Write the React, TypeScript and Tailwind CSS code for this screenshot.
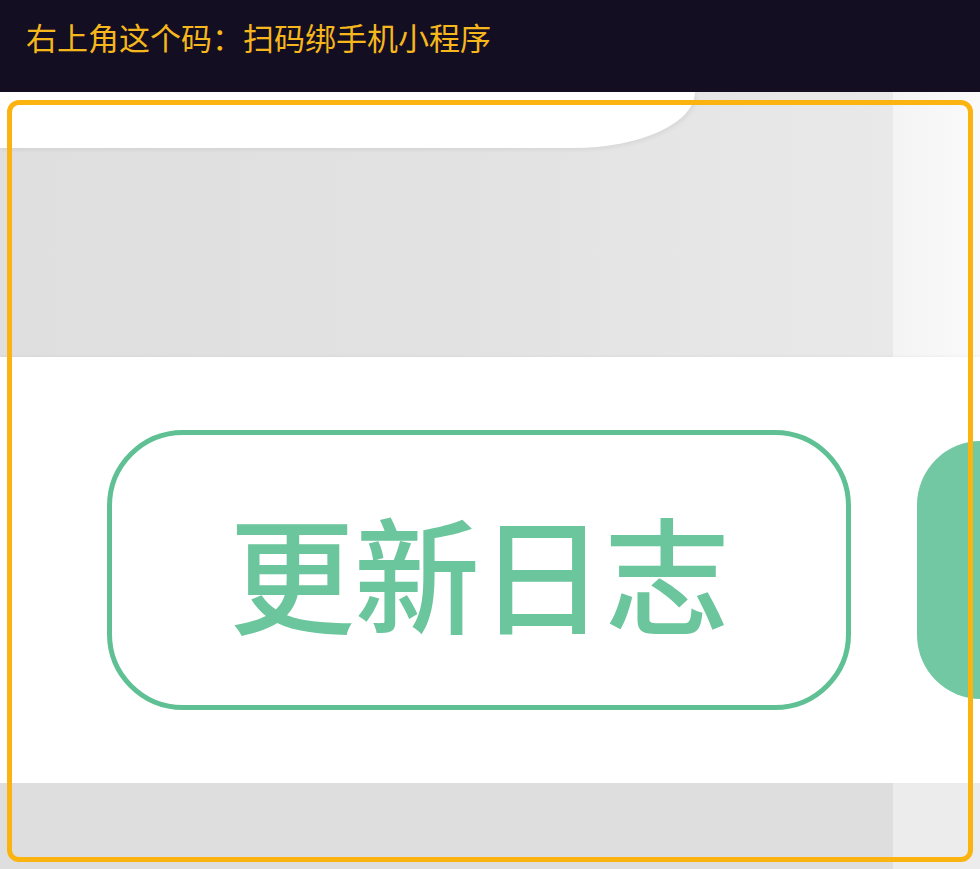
export default function App() {
  return (
    <div
      className="w-[980px] h-[869px] flex flex-col overflow-hidden bg-white"
      style={{ fontFamily: '"Noto Sans CJK SC", "Noto Sans", sans-serif' }}
    >
      <div className="h-[92px] shrink-0 bg-[#130e21] px-[26px] pt-[13px]">
        <p className="text-[31px] leading-[48px] text-[#f6b71d]">右上角这个码：扫码绑手机小程序</p>
      </div>

      <div className="relative flex-1 flex flex-col">
        {/* top gray strip with tab curve */}
        <div className="h-[265px] flex">
          <div className="w-[893px] flex flex-col bg-gradient-to-r from-[#dfdfdf] via-[#e2e2e2] to-[#e9e9e9]">
            <div className="h-[56px] flex">
              <div className="w-[695px] h-[56px] bg-white rounded-br-[130px_60px] shadow-[2px_2px_4px_rgba(0,0,0,0.06)]" />
            </div>
            <div className="flex-1" />
          </div>
          <div className="flex-1 bg-gradient-to-r from-[#f4f4f4] to-[#fafafa]" />
        </div>

        {/* white band with buttons */}
        <div className="h-[426px] flex items-center pl-[107px] gap-[66px] bg-white shadow-[0_0_4px_rgba(0,0,0,0.06)]">
          <div className="shrink-0 w-[744px] h-[280px] rounded-[76px] border-[5px] border-[#5fc094] flex items-center justify-center">
            <span className="text-[126px] leading-none font-medium text-[#6bc59d] tracking-[-1px]">更新日志</span>
          </div>
          <div className="shrink-0 w-[400px] h-[258px] rounded-[64px] bg-[#72c8a2]" />
        </div>

        {/* bottom gray strip */}
        <div className="flex-1 flex">
          <div className="w-[893px] bg-[#dedede]" />
          <div className="flex-1 bg-[#ececec]" />
        </div>

        {/* highlight frame */}
        <div className="absolute left-[7px] top-[8px] w-[966px] h-[762px] rounded-[12px] border-[5px] border-[#fbb40f]" />
      </div>
    </div>
  );
}
